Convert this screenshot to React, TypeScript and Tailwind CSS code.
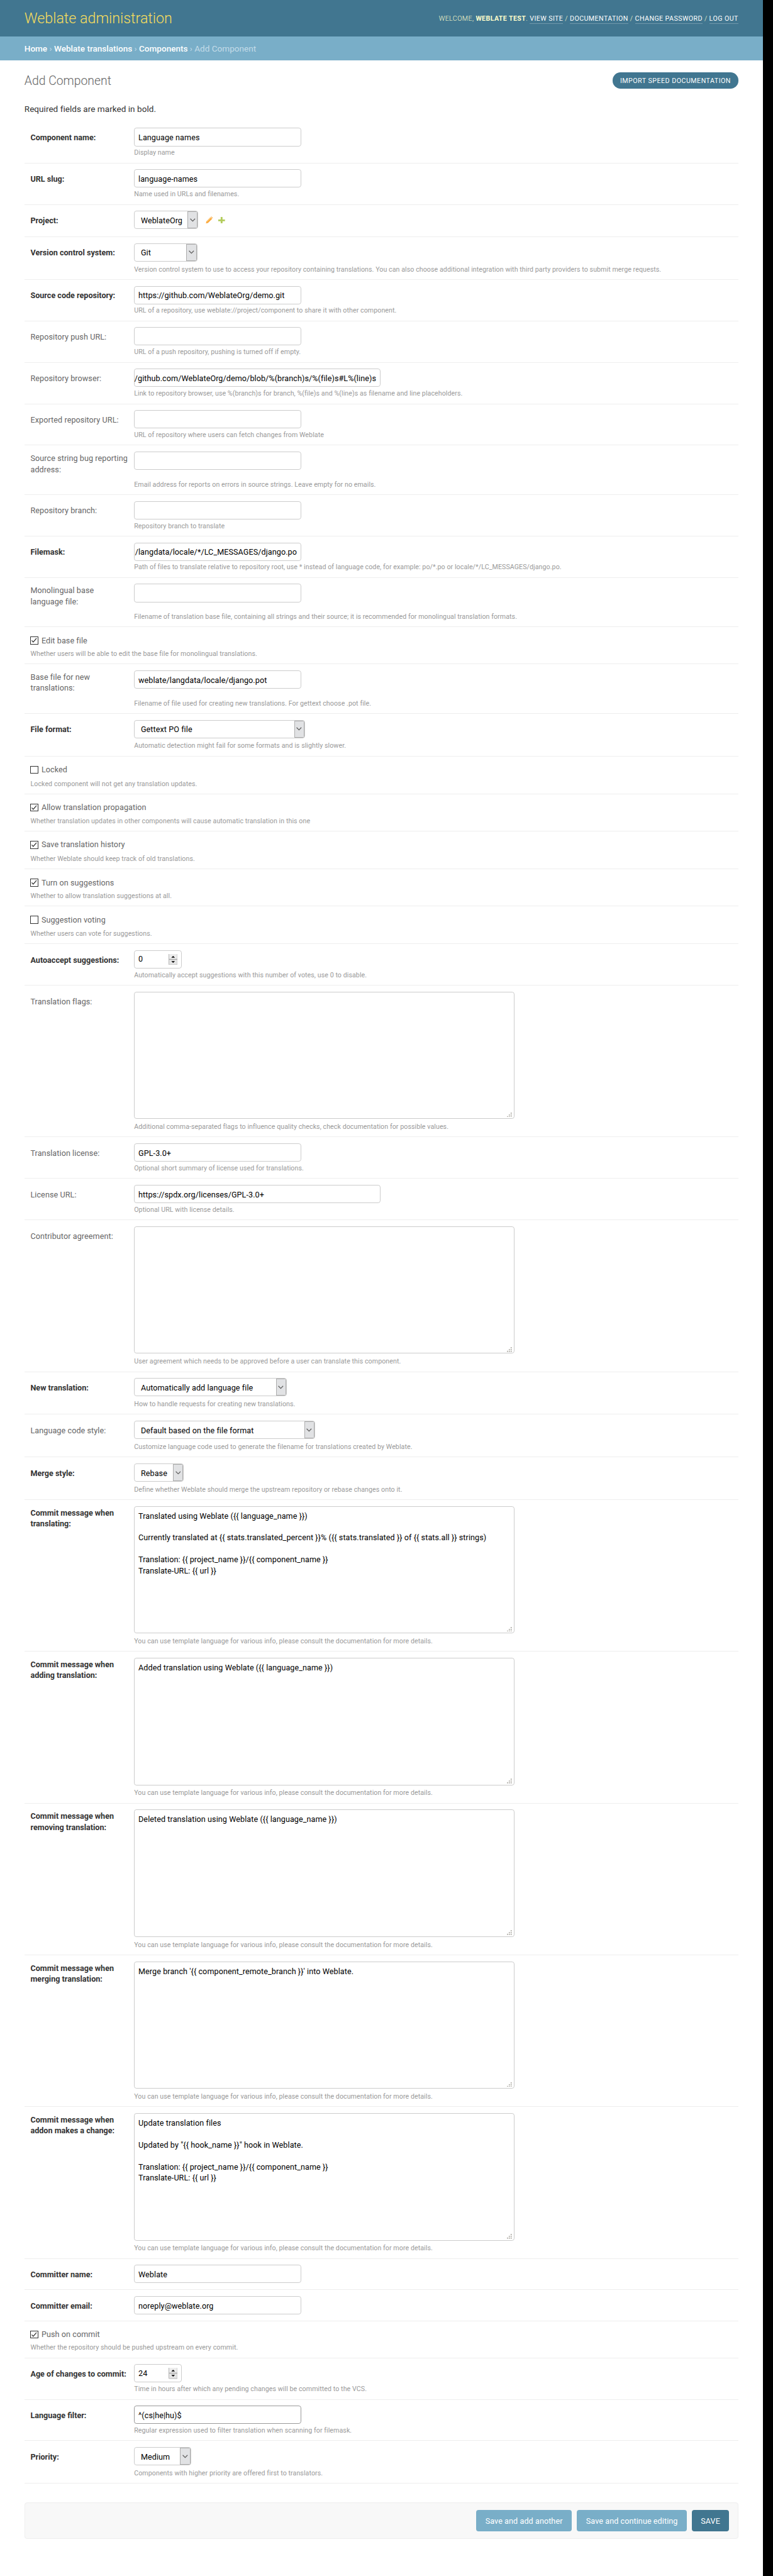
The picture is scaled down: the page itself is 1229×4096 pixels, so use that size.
import React from "react";

type Control =
  | { kind: "text"; value?: string; width?: string; scrolled?: boolean; focused?: boolean }
  | { kind: "select"; value: string; width: string; related?: boolean }
  | { kind: "number"; value: string }
  | { kind: "textarea"; value?: string };

type RowData = {
  label: string;
  height: string;
  required?: boolean;
  help?: string;
  control?: Control;
  checked?: boolean;
};

const TEMPLATE_HELP =
  "You can use template language for various info, please consult the documentation for more details.";

const rows: RowData[] = [
  { label: "Component name:", required: true, height: "h-[68px]", help: "Display name", control: { kind: "text", value: "Language names" } },
  { label: "URL slug:", required: true, height: "h-[68px]", help: "Name used in URLs and filenames.", control: { kind: "text", value: "language-names" } },
  { label: "Project:", required: true, height: "h-[53px]", control: { kind: "select", value: "WeblateOrg", width: "w-[105.5px]", related: true } },
  {
    label: "Version control system:",
    required: true,
    height: "h-[70px]",
    help: "Version control system to use to access your repository containing translations. You can also choose additional integration with third party providers to submit merge requests.",
    control: { kind: "select", value: "Git", width: "w-[103.5px]" },
  },
  { label: "Source code repository:", required: true, height: "h-[68px]", help: "URL of a repository, use weblate://project/component to share it with other component.", control: { kind: "text", value: "https://github.com/WeblateOrg/demo.git" } },
  { label: "Repository push URL:", height: "h-[68px]", help: "URL of a push repository, pushing is turned off if empty.", control: { kind: "text" } },
  {
    label: "Repository browser:",
    height: "h-[68px]",
    help: "Link to repository browser, use %(branch)s for branch, %(file)s and %(line)s as filename and line placeholders.",
    control: { kind: "text", value: "/github.com/WeblateOrg/demo/blob/%(branch)s/%(file)s#L%(line)s", width: "w-[404px]", scrolled: true },
  },
  { label: "Exported repository URL:", height: "h-[68px]", help: "URL of repository where users can fetch changes from Weblate", control: { kind: "text" } },
  { label: "Source string bug reporting\naddress:", height: "h-[81px]", help: "Email address for reports on errors in source strings. Leave empty for no emails.", control: { kind: "text" } },
  { label: "Repository branch:", height: "h-[68px]", help: "Repository branch to translate", control: { kind: "text" } },
  {
    label: "Filemask:",
    required: true,
    height: "h-[68px]",
    help: "Path of files to translate relative to repository root, use * instead of language code, for example: po/*.po or locale/*/LC_MESSAGES/django.po.",
    control: { kind: "text", value: "/langdata/locale/*/LC_MESSAGES/django.po", scrolled: true },
  },
  { label: "Monolingual base\nlanguage file:", height: "h-[81px]", help: "Filename of translation base file, containing all strings and their source; it is recommended for monolingual translation formats.", control: { kind: "text" } },
  { label: "Edit base file", height: "h-[61px]", checked: true, help: "Whether users will be able to edit the base file for monolingual translations." },
  { label: "Base file for new\ntranslations:", height: "h-[81px]", help: "Filename of file used for creating new translations. For gettext choose .pot file.", control: { kind: "text", value: "weblate/langdata/locale/django.pot" } },
  { label: "File format:", required: true, height: "h-[70px]", help: "Automatic detection might fail for some formats and is slightly slower.", control: { kind: "select", value: "Gettext PO file", width: "w-[280.5px]" } },
  { label: "Locked", height: "h-[62px]", checked: false, help: "Locked component will not get any translation updates." },
  { label: "Allow translation propagation", height: "h-[61px]", checked: true, help: "Whether translation updates in other components will cause automatic translation in this one" },
  { label: "Save translation history", height: "h-[62px]", checked: true, help: "Whether Weblate should keep track of old translations." },
  { label: "Turn on suggestions", height: "h-[61px]", checked: true, help: "Whether to allow translation suggestions at all." },
  { label: "Suggestion voting", height: "h-[62px]", checked: false, help: "Whether users can vote for suggestions." },
  { label: "Autoaccept suggestions:", required: true, height: "h-[68px]", help: "Automatically accept suggestions with this number of votes, use 0 to disable.", control: { kind: "number", value: "0" } },
  { label: "Translation flags:", height: "h-[249px]", help: "Additional comma-separated flags to influence quality checks, check documentation for possible values.", control: { kind: "textarea" } },
  { label: "Translation license:", height: "h-[68px]", help: "Optional short summary of license used for translations.", control: { kind: "text", value: "GPL-3.0+" } },
  { label: "License URL:", height: "h-[68px]", help: "Optional URL with license details.", control: { kind: "text", value: "https://spdx.org/licenses/GPL-3.0+", width: "w-[404px]" } },
  { label: "Contributor agreement:", height: "h-[249px]", help: "User agreement which needs to be approved before a user can translate this component.", control: { kind: "textarea" } },
  { label: "New translation:", required: true, height: "h-[70px]", help: "How to handle requests for creating new translations.", control: { kind: "select", value: "Automatically add language file", width: "w-[250.5px]" } },
  { label: "Language code style:", height: "h-[70px]", help: "Customize language code used to generate the filename for translations created by Weblate.", control: { kind: "select", value: "Default based on the file format", width: "w-[297px]" } },
  { label: "Merge style:", required: true, height: "h-[70px]", help: "Define whether Weblate should merge the upstream repository or rebase changes onto it.", control: { kind: "select", value: "Rebase", width: "w-[81.5px]" } },
  {
    label: "Commit message when\ntranslating:",
    required: true,
    height: "h-[249px]",
    help: TEMPLATE_HELP,
    control: {
      kind: "textarea",
      value:
        "Translated using Weblate ({{ language_name }})\n\nCurrently translated at {{ stats.translated_percent }}% ({{ stats.translated }} of {{ stats.all }} strings)\n\nTranslation: {{ project_name }}/{{ component_name }}\nTranslate-URL: {{ url }}",
    },
  },
  { label: "Commit message when\nadding translation:", required: true, height: "h-[249px]", help: TEMPLATE_HELP, control: { kind: "textarea", value: "Added translation using Weblate ({{ language_name }})" } },
  { label: "Commit message when\nremoving translation:", required: true, height: "h-[249px]", help: TEMPLATE_HELP, control: { kind: "textarea", value: "Deleted translation using Weblate ({{ language_name }})" } },
  { label: "Commit message when\nmerging translation:", required: true, height: "h-[249px]", help: TEMPLATE_HELP, control: { kind: "textarea", value: "Merge branch '{{ component_remote_branch }}' into Weblate." } },
  {
    label: "Commit message when\naddon makes a change:",
    required: true,
    height: "h-[249px]",
    help: TEMPLATE_HELP,
    control: {
      kind: "textarea",
      value:
        'Update translation files\n\nUpdated by "{{ hook_name }}" hook in Weblate.\n\nTranslation: {{ project_name }}/{{ component_name }}\nTranslate-URL: {{ url }}',
    },
  },
  { label: "Committer name:", required: true, height: "h-[51px]", control: { kind: "text", value: "Weblate" } },
  { label: "Committer email:", required: true, height: "h-[51px]", control: { kind: "text", value: "noreply@weblate.org" } },
  { label: "Push on commit", height: "h-[61px]", checked: true, help: "Whether the repository should be pushed upstream on every commit." },
  { label: "Age of changes to commit:", required: true, height: "h-[68px]", help: "Time in hours after which any pending changes will be committed to the VCS.", control: { kind: "number", value: "24" } },
  { label: "Language filter:", required: true, height: "h-[68px]", help: "Regular expression used to filter translation when scanning for filemask.", control: { kind: "text", value: "^(cs|he|hu)$", focused: true } },
  { label: "Priority:", required: true, height: "h-[70px]", help: "Components with higher priority are offered first to translators.", control: { kind: "select", value: "Medium", width: "w-[93.5px]" } },
];

function TextField({ value = "", width = "w-[274px]", scrolled, focused }: { value?: string; width?: string; scrolled?: boolean; focused?: boolean }) {
  return (
    <div
      className={`${width} ${focused ? "border-[#999]" : "border-[#ccc]"} ${scrolled ? "justify-end" : "justify-start"} flex h-[30px] items-center rounded-[4px] border px-[6px] pt-[2px] leading-[20px] whitespace-nowrap`}
    >
      <span>{value}</span>
    </div>
  );
}

function SelectField({ value, width }: { value: string; width: string }) {
  return (
    <div className={`${width} flex h-[30px] overflow-hidden rounded-[4px] border border-[#ccc]`}>
      <div className="min-w-0 flex-1 pt-[6px] pl-[10px] leading-[19px] whitespace-nowrap">{value}</div>
      <div className="flex w-[17px] shrink-0 items-center justify-center border border-[#adadad] bg-[#e1e2e4]">
        <svg width="9" height="6" viewBox="0 0 9 6" fill="none" stroke="#5c5c5c" strokeWidth="1.2">
          <path d="M0.6 0.8 4.5 4.7 8.4 0.8" />
        </svg>
      </div>
    </div>
  );
}

function NumberField({ value }: { value: string }) {
  return (
    <div className="flex h-[30px] w-[78.5px] items-center justify-between rounded-[4px] border border-[#ccc] pr-[6px] pl-[6px]">
      <span className="pt-[1px]">{value}</span>
      <svg width="15" height="18" viewBox="0 0 15 18">
        <rect x="0.5" y="0" width="14" height="8.5" fill="#ececec" />
        <rect x="0.5" y="9" width="14" height="8.5" fill="#e6e6e6" />
        <path d="M0.5 0V17.5H14.5V0" fill="none" stroke="#b5b5b5" />
        <path d="M0.5 8.7H14.5" stroke="#a8a8a8" strokeWidth="1.4" />
        <path d="M4.5 6 7.5 3 10.5 6Z" fill="#000" />
        <path d="M4.5 11.5 7.5 14.5 10.5 11.5Z" fill="#000" />
      </svg>
    </div>
  );
}

function TextArea({ value = "" }: { value?: string }) {
  return (
    <div className="relative h-[209px] w-[624px] rounded-[4px] border border-[#ccc] px-[6px] pt-[6px] leading-[18px] whitespace-pre">
      {value}
      <svg className="absolute right-[3px] bottom-[2px]" width="8" height="8" viewBox="0 0 8 8" fill="#b9b7b1">
        <path d="M6 0h2v2H6zM3 3h2v2H3zM6 3h2v2H6zM0 6h2v2H0zM3 6h2v2H3zM6 6h2v2H6z" />
      </svg>
    </div>
  );
}

function RelatedLinks() {
  return (
    <div className="flex items-center gap-[9px] pl-[12px]">
      <svg width="12" height="12" viewBox="0 0 12 12">
        <path d="M0.4 11.6 1.2 8.2 8 1.4 10.6 4 3.8 10.8Z" fill="#fba73a" />
        <path d="M2 8.6 8.3 2.3" stroke="#ffcf80" strokeWidth="1.1" />
        <path d="M8.6 0.8 9.3 0.3 11.7 2.7 11.2 3.4Z" fill="#f79a1f" />
      </svg>
      <svg width="11" height="11" viewBox="0 0 11 11">
        <path d="M4 0h3v4h4v3H7v4H4V7H0V4h4z" fill="#b3cc5c" />
      </svg>
    </div>
  );
}

function ControlView({ control }: { control: Control }) {
  switch (control.kind) {
    case "text":
      return <TextField value={control.value} width={control.width} scrolled={control.scrolled} focused={control.focused} />;
    case "select":
      return (
        <div className="flex items-center">
          <SelectField value={control.value} width={control.width} />
          {control.related && <RelatedLinks />}
        </div>
      );
    case "number":
      return <NumberField value={control.value} />;
    case "textarea":
      return <TextArea value={control.value} />;
  }
}

function Help({ text }: { text: string }) {
  return <p className="text-[11px] leading-[14px] tracking-[0.065px] whitespace-nowrap text-[#999]">{text}</p>;
}

function Checkbox({ checked }: { checked: boolean }) {
  return (
    <span className="flex h-[13px] w-[13px] items-center justify-center border border-[#333]">
      {checked && (
        <svg width="11" height="11" viewBox="0 0 11 11" fill="none" stroke="#222" strokeWidth="1.2">
          <path d="M1.5 5.6 4 8.2 9.4 2" />
        </svg>
      )}
    </span>
  );
}

function FormRow({ row }: { row: RowData }) {
  if (!row.control) {
    return (
      <div className={`${row.height} flex flex-col justify-between border-b border-[#eee] pt-[13px] pb-[9px] pl-[10px]`}>
        <div className="flex items-center gap-[5px] leading-[18px] text-[#666]">
          <Checkbox checked={!!row.checked} />
          <span>{row.label}</span>
        </div>
        {row.help && <Help text={row.help} />}
      </div>
    );
  }
  const twoLines = row.label.includes("\n");
  return (
    <div className={`${row.height} flex border-b border-[#eee] pl-[10px]`}>
      <label
        className={`${twoLines ? "pt-[12px]" : "pt-[17px]"} ${row.required ? "font-bold tracking-normal text-[#333]" : "text-[#666]"} w-[170px] shrink-0 leading-[18px] whitespace-pre`}
      >
        {row.label}
      </label>
      <div className="flex flex-1 flex-col justify-between pt-[10px] pb-[9px] text-black">
        <ControlView control={row.control} />
        {row.help && <Help text={row.help} />}
      </div>
    </div>
  );
}

function UserLink({ children }: { children: React.ReactNode }) {
  return <a className="border-b border-white/25 pb-[1px] font-normal text-white">{children}</a>;
}

export default function App() {
  return (
    <div className="flex h-[4226px] w-[1268px] overflow-hidden bg-black font-['Roboto',sans-serif] text-[13px] tracking-[0.08px] [zoom:0.96924]">
      <div className="flex w-[1251px] flex-col bg-white">
        <header className="flex h-[60px] items-center justify-between bg-[#417690] px-[40px]">
          <h1 className="text-[24px] leading-[28px] font-light tracking-normal text-[#f5dd5d]">Weblate administration</h1>
          <div className="pt-[2px] text-[11px] leading-[14px] font-light tracking-[0.43px] whitespace-nowrap text-[#ffc] uppercase">
            Welcome, <strong className="font-bold tracking-[0.4px]">Weblate Test</strong>. <UserLink>View site</UserLink> / <UserLink>Documentation</UserLink> /{" "}
            <UserLink>Change password</UserLink> / <UserLink>Log out</UserLink>
          </div>
        </header>
        <nav className="flex h-[39px] items-center bg-[#79aec8] px-[40px] pt-[1px] text-[14px] tracking-normal text-[#c4dce8]">
          <span className="whitespace-nowrap">
            <a className="font-medium text-white">Home</a> › <a className="font-medium text-white">Weblate translations</a> ›{" "}
            <a className="font-medium text-white">Components</a> › Add Component
          </span>
        </nav>
        <main className="px-[40px] pt-[20px]">
          <div className="flex h-[28px] items-start justify-between">
            <h2 className="text-[20px] leading-[28px] font-light tracking-normal text-[#666]">Add Component</h2>
            <a className="flex h-[26px] w-[206px] items-center justify-center rounded-[13px] bg-[#417690] pt-[2px] text-[11px] tracking-[0.5px] whitespace-nowrap text-white">
              IMPORT SPEED DOCUMENTATION
            </a>
          </div>
          <p className="mt-[23px] text-[14px] leading-[18px] tracking-[0.03px] text-[#333]">Required fields are marked in bold.</p>
          <form className="mt-[12px]">
            {rows.map((row) => (
              <FormRow key={row.label} row={row} />
            ))}
          </form>
          <div className="mt-[31px] flex h-[60px] items-center justify-end gap-[8px] rounded-[4px] border border-[#eee] bg-[#f8f8f8] pr-[14px] text-white">
            <span className="flex h-[35px] w-[157px] items-center justify-center rounded-[4px] bg-[#79aec8] pt-[2px]">Save and add another</span>
            <span className="flex h-[35px] w-[181px] items-center justify-center rounded-[4px] bg-[#79aec8] pt-[2px]">Save and continue editing</span>
            <span className="flex h-[35px] w-[61px] items-center justify-center rounded-[4px] bg-[#417690] pt-[2px]">SAVE</span>
          </div>
        </main>
      </div>
    </div>
  );
}
